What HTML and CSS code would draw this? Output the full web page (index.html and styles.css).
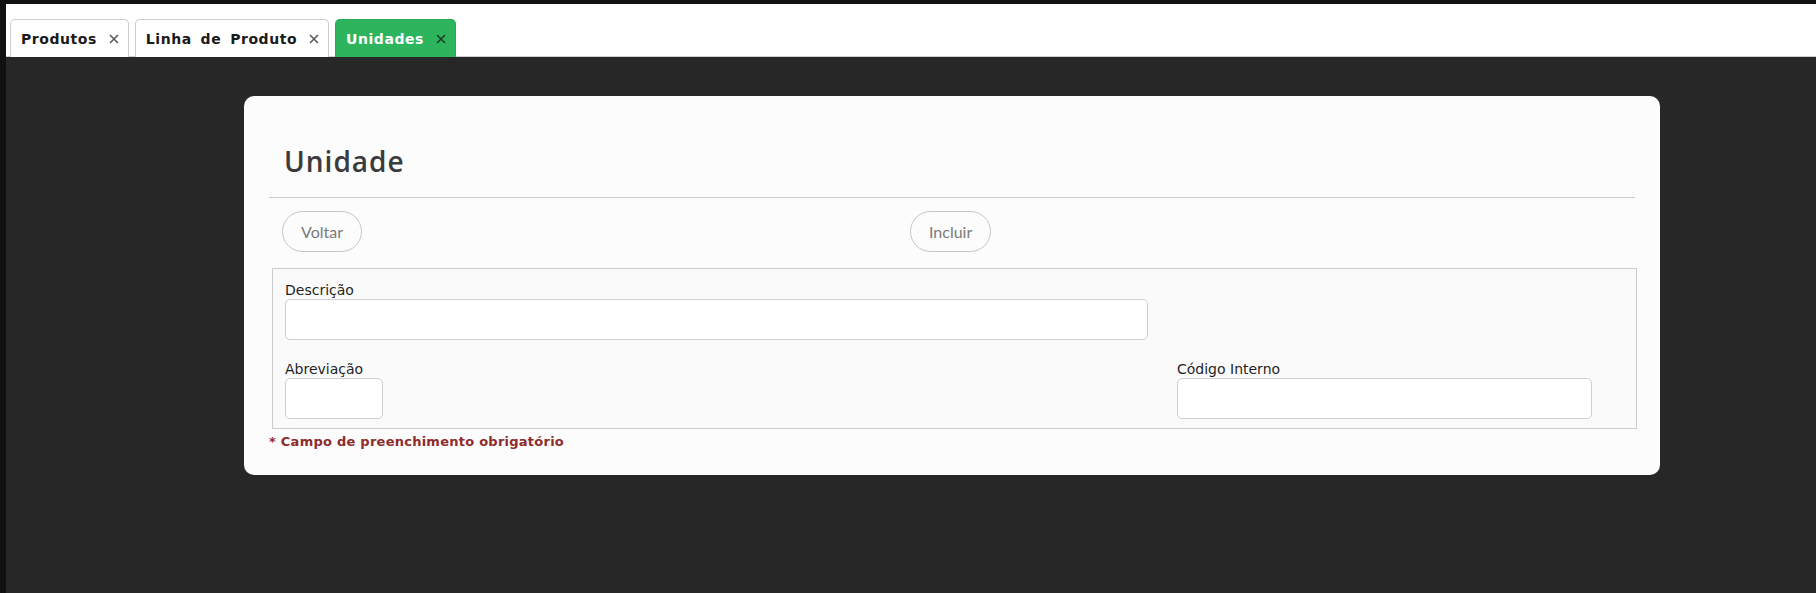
FILE: index.html
```html
<!DOCTYPE html>
<html lang="pt-BR">
<head>
<meta charset="utf-8">
<title>Unidades</title>
<link rel="stylesheet" href="styles.css">
</head>
<body>
<div class="app">
  <nav class="tabbar">
    <div class="tab">
      <span class="tab-label">Produtos</span>
      <svg class="tab-x" viewBox="0 0 10 10" width="10" height="10"><path d="M1 1L9 9M9 1L1 9"/></svg>
    </div>
    <div class="tab">
      <span class="tab-label">Linha de Produto</span>
      <svg class="tab-x" viewBox="0 0 10 10" width="10" height="10"><path d="M1 1L9 9M9 1L1 9"/></svg>
    </div>
    <div class="tab tab-active">
      <span class="tab-label">Unidades</span>
      <svg class="tab-x" viewBox="0 0 10 10" width="10" height="10"><path d="M1 1L9 9M9 1L1 9"/></svg>
    </div>
  </nav>
  <main class="content">
    <section class="card">
      <h1 class="title">Unidade</h1>
      <hr class="divider">
      <div class="actions">
        <button class="pill">Voltar</button>
        <button class="pill">Incluir</button>
      </div>
      <div class="fieldset">
        <div class="field field-desc">
          <label class="label">Descrição</label>
          <input class="input" type="text">
        </div>
        <div class="row2">
          <div class="field field-abrev">
            <label class="label">Abreviação</label>
            <input class="input" type="text">
          </div>
          <div class="field field-cod">
            <label class="label">Código Interno</label>
            <input class="input" type="text">
          </div>
        </div>
      </div>
      <p class="required">* Campo de preenchimento obrigatório</p>
    </section>
  </main>
</div>
</body>
</html>
```

FILE: styles.css
```css
html, body {
  margin: 0;
  padding: 0;
  height: 100%;
}
body {
  background: #111111;
  font-family: "DejaVu Sans", Verdana, sans-serif;
  overflow: hidden;
}
.app {
  margin-left: 6px;
  padding-top: 4px;
  height: calc(100% - 4px);
  display: flex;
  flex-direction: column;
}
.tabbar {
  background: #ffffff;
  height: 53px;
  box-sizing: border-box;
  border-bottom: 1px solid #cfcfcf;
  display: flex;
  align-items: flex-end;
  gap: 6px;
  padding-left: 4px;
}
.tab {
  height: 38px;
  box-sizing: border-box;
  border: 1px solid #cccccc;
  border-bottom: none;
  border-radius: 5px 5px 0 0;
  background: #ffffff;
  display: flex;
  align-items: center;
  padding: 0 9px 0 10px;
  gap: 12px;
  margin-bottom: -1px;
}
.tab-label {
  font-weight: bold;
  font-size: 14px;
  letter-spacing: 0.55px;
  word-spacing: 3.5px;
  color: #1a1a1a;
}
.tab-x {
  stroke: #5a5a5a;
  stroke-width: 1.6;
  fill: none;
}
.tab-active {
  background: #2db55d;
  border-color: #2aa957;
}
.tab-active .tab-label {
  color: #ffffff;
}
.tab-active .tab-x {
  stroke: #1d3d28;
}
.content {
  flex: 1;
  background: #272727;
  padding: 39px 156px 0 238px;
}
.card {
  background: #fcfcfc;
  border-radius: 10px;
  padding: 45px 25px 25px 25px;
}
.title {
  margin: 0 0 0 15px;
  font-family: "Open Sans", sans-serif;
  font-weight: 600;
  font-size: 28px;
  line-height: 40px;
  letter-spacing: 1px;
  color: #3b3b3b;
}
.divider {
  margin: 16px 0 0 0;
  border: none;
  border-top: 1px solid #cccccc;
  height: 0;
}
.actions {
  display: grid;
  grid-template-columns: 628px auto;
  justify-content: start;
  padding: 13px 0 0 13px;
}
.pill {
  height: 41px;
  box-sizing: border-box;
  border: 1px solid #c6c6c6;
  border-radius: 21px;
  background: transparent;
  font-family: Lato, "Open Sans", sans-serif;
  font-size: 16px;
  color: #7a7a7a;
  padding: 0 18px;
  justify-self: start;
}
.fieldset {
  margin: 16px -2px 0 3px;
  border: 1px solid #cccccc;
  background: #fafafa;
  padding: 12px 12px 9px 12px;
}
.field {
  display: flex;
  flex-direction: column;
}
.label {
  font-size: 14px;
  line-height: 18px;
  color: #1f1f1f;
}
.input {
  height: 41px;
  box-sizing: border-box;
  border: 1px solid #cfcfcf;
  border-radius: 5px;
  background: #ffffff;
  margin: 0;
}
.field-desc .input {
  width: 863px;
}
.row2 {
  display: grid;
  grid-template-columns: 892px 415px;
  margin-top: 20px;
}
.field-abrev .input {
  width: 98px;
}
.field-cod .input {
  width: 415px;
}
.required {
  margin: 5px 0 0 0;
  font-weight: bold;
  font-size: 13px;
  line-height: 16px;
  letter-spacing: 0.25px;
  color: #8e2b2b;
}
```
